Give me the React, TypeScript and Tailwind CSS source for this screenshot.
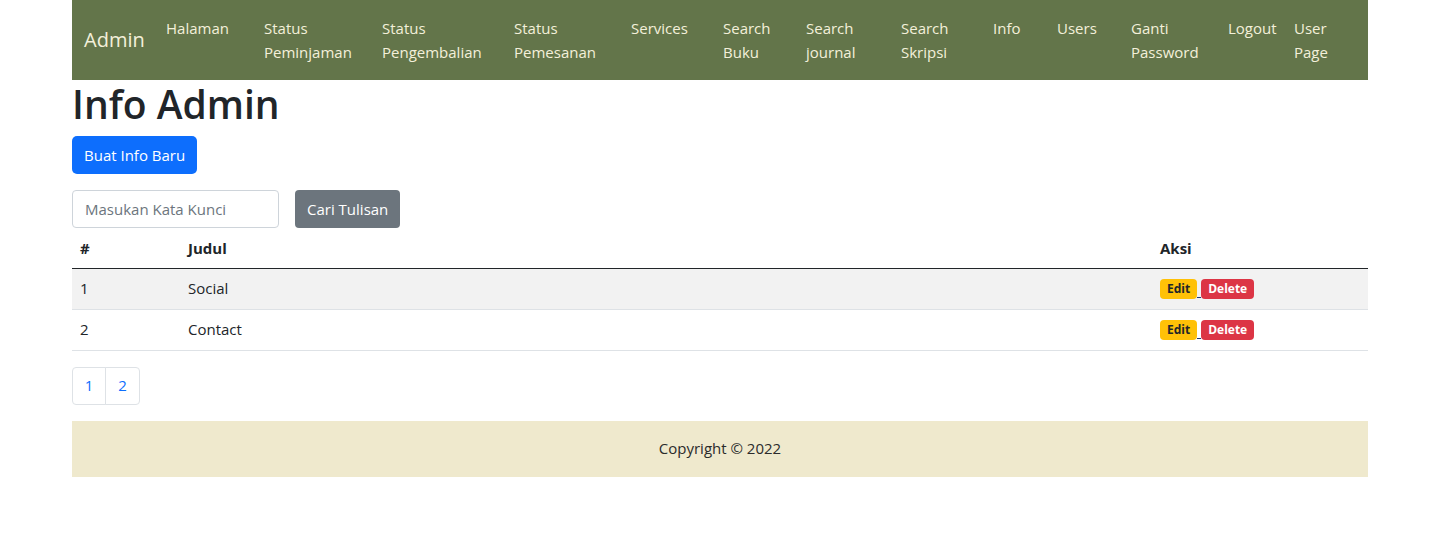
import React from "react";

const navLinks: { lines: string[]; w: string }[] = [
  { lines: ["Halaman"], w: "w-[98px]" },
  { lines: ["Status", "Peminjaman"], w: "w-[118px]" },
  { lines: ["Status", "Pengembalian"], w: "w-[132px]" },
  { lines: ["Status", "Pemesanan"], w: "w-[117px]" },
  { lines: ["Services"], w: "w-[92px]" },
  { lines: ["Search", "Buku"], w: "w-[83px]" },
  { lines: ["Search", "journal"], w: "w-[95px]" },
  { lines: ["Search", "Skripsi"], w: "w-[92px]" },
  { lines: ["Info"], w: "w-[64px]" },
  { lines: ["Users"], w: "w-[74px]" },
  { lines: ["Ganti", "Password"], w: "w-[97px]" },
  { lines: ["Logout"], w: "w-[66px]" },
  { lines: ["User", "Page"], w: "w-[60px]" },
];

const rows = [
  { id: 1, judul: "Social" },
  { id: 2, judul: "Contact" },
];

export default function App() {
  return (
    <div className="min-h-screen bg-white text-[#212529] font-['Open_Sans',sans-serif]">
      <div className="ml-[72px] w-[1296px]">
        <nav className="flex h-20 bg-[#63754a] pl-3 text-[#f3f0da]">
          <div className="w-[82px] self-center text-[20px] leading-[30px]">Admin</div>
          {navLinks.map((l) => (
            <div key={l.lines.join(" ")} className={`${l.w} pt-4 text-[15px] leading-6`}>
              {l.lines.map((t) => (
                <div key={t}>{t}</div>
              ))}
            </div>
          ))}
        </nav>

        <h1 className="mb-2 text-[39px] font-semibold leading-[48px]">Info Admin</h1>
        <button className="h-[38px] rounded-[5px] bg-[#0d6efd] px-3 text-[15px] text-white">
          Buat Info Baru
        </button>

        <div className="mt-4 flex gap-4">
          <input
            placeholder="Masukan Kata Kunci"
            className="h-[38px] w-[207px] rounded-[4px] border border-[#ced4da] px-3 text-[15px] placeholder:text-[#6c757d]"
          />
          <button className="h-[38px] rounded-[4px] bg-[#6c757d] px-3 text-[15px] text-white">
            Cari Tulisan
          </button>
        </div>

        <table className="w-full border-collapse text-[15px]">
          <thead>
            <tr className="h-[40px] border-b border-[#212529] text-left">
              <th className="w-[108px] px-2 font-bold">#</th>
              <th className="px-2 font-bold">Judul</th>
              <th className="w-[216px] px-2 font-bold">Aksi</th>
            </tr>
          </thead>
          <tbody>
            {rows.map((r, i) => (
              <tr key={r.id} className={`h-[41px] border-b border-[#dee2e6] ${i === 0 ? "bg-[#f2f2f2]" : ""}`}>
                <td className="px-2">{r.id}</td>
                <td className="px-2">{r.judul}</td>
                <td className="px-2">
                  <div className="flex items-end">
                    <span className="rounded-[4px] bg-[#ffc107] px-[7px] text-[12px] font-bold leading-5 text-[#212529]">
                      Edit
                    </span>
                    <span className="mb-[1px] h-px w-1 bg-[#1f3b7a]" />
                    <span className="rounded-[4px] bg-[#dc3545] px-[7px] text-[12px] font-bold leading-5 text-white">
                      Delete
                    </span>
                  </div>
                </td>
              </tr>
            ))}
          </tbody>
        </table>

        <div className="mt-4 flex">
          <a className="flex h-[38px] w-[34px] items-center justify-center rounded-l-[4px] border border-[#dee2e6] text-[15px] text-[#0d6efd]">
            1
          </a>
          <a className="-ml-px flex h-[38px] w-[35px] items-center justify-center rounded-r-[4px] border border-[#dee2e6] text-[15px] text-[#0d6efd]">
            2
          </a>
        </div>

        <footer className="mt-4 flex h-[56px] items-center justify-center bg-[#efe9cd] text-[15px] text-[#2b2b2b]">
          Copyright © 2022
        </footer>
      </div>
    </div>
  );
}
